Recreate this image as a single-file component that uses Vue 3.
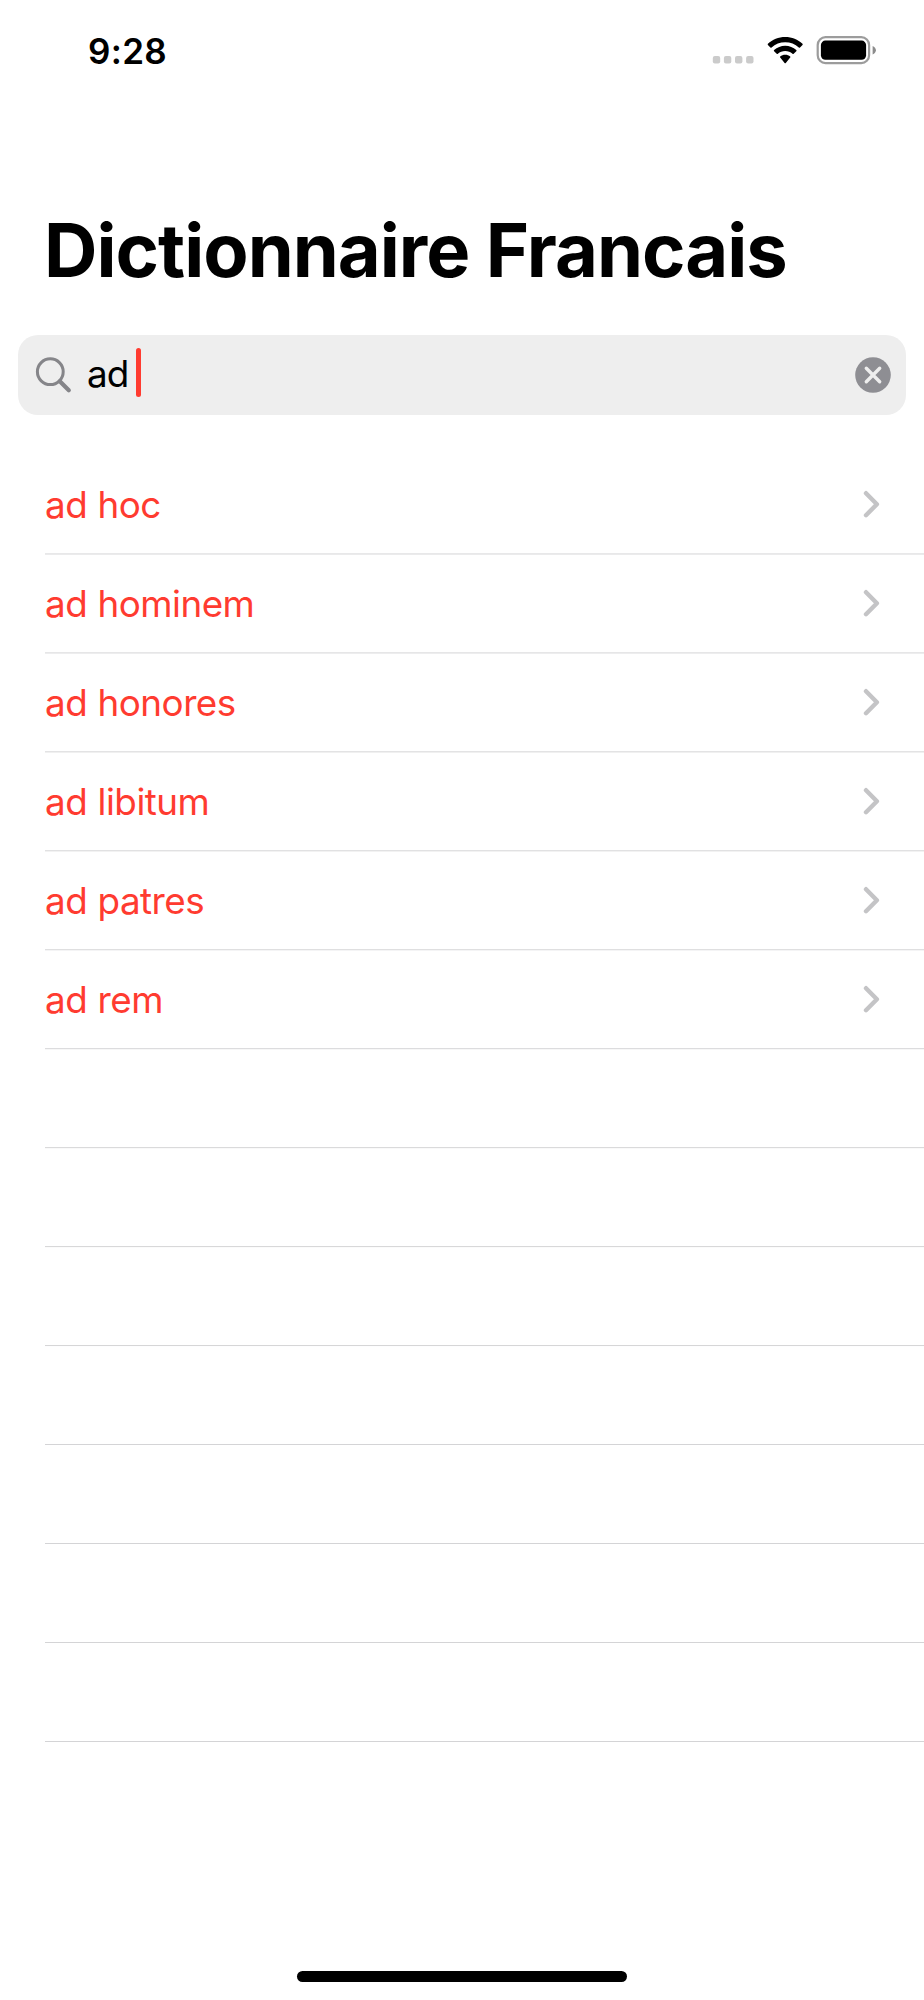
<script setup>
const words = ['ad hoc', 'ad hominem', 'ad honores', 'ad libitum', 'ad patres', 'ad rem']
const separatorCount = 13
const rowPitch = 98.96
</script>

<template>
  <main class="screen">
    <header class="status">
      <span class="time">9:28</span>
      <svg class="indicators" width="190" height="60" viewBox="0 0 190 60">
        <g fill="#cbcbcb">
          <rect x="12.8" y="36" width="7.4" height="7.4" rx="2" />
          <rect x="23.9" y="36" width="7.4" height="7.4" rx="2" />
          <rect x="35" y="36" width="7.4" height="7.4" rx="2" />
          <rect x="46.1" y="36" width="7.4" height="7.4" rx="2" />
        </g>
        <path d="M85.2 17C78.5 17 72.400 19.600 67.900 23.800Q67.400 24.400 67.900 25L70.400 27.500Q71 28 71.600 27.500C75.200 24.200 80 22.300 85.200 22.300S95.200 24.200 98.800 27.500Q99.400 28 100 27.500L102.500 25Q103 24.400 102.500 23.800C98 19.600 91.900 17 85.200 17Z" />
        <path d="M85.200 25.800C81 25.800 77.100 27.400 74.100 30Q73.500 30.600 74.100 31.200L76.700 33.800Q77.300 34.300 77.900 33.800C79.900 32.100 82.400 31.100 85.200 31.100S90.500 32.100 92.500 33.800Q93.100 34.300 93.700 33.800L96.300 31.200Q96.900 30.600 96.300 30C93.300 27.400 89.400 25.800 85.200 25.800Z" />
        <path d="M85.200 34.700C83.300 34.700 81.500 35.400 80.200 36.400Q79.600 37 80.200 37.600L84.600 42.900Q85.200 43.500 85.800 42.900L90.200 37.600Q90.800 37 90.200 36.400C88.900 35.400 87.100 34.700 85.200 34.700Z" />
        <rect x="117.700" y="17.200" width="51.400" height="25.900" rx="7.800" fill="none" stroke="#9c9c9c" stroke-width="2.200" />
        <rect x="120.900" y="20.600" width="45.200" height="19.200" rx="4.500" />
        <path d="M172.600 26V34.600C174.600 33.700 175.900 32.200 175.900 30.300S174.600 26.900 172.600 26Z" fill="#8c8c8c" />
      </svg>
    </header>

    <h1 class="title">Dictionnaire Francais</h1>

    <div class="search">
      <svg class="magnifier" width="40" height="40" viewBox="0 0 40 40" fill="none" stroke="#858589">
        <circle cx="17.300" cy="16.700" r="12.900" stroke-width="3" />
        <path d="M26.800 26.200L35.800 35.200" stroke-width="4.200" stroke-linecap="round" />
      </svg>
      <span class="query">ad</span>
      <span class="caret"></span>
      <svg class="clear" width="36" height="36" viewBox="0 0 36 36">
        <circle cx="18" cy="18" r="17.800" fill="#8e8e93" />
        <path d="M11.300 11.300L24.700 24.700M24.700 11.300L11.300 24.700" stroke="#eee" stroke-width="3.400" stroke-linecap="round" />
      </svg>
    </div>

    <section class="results">
      <svg class="separators" width="879" height="1300" viewBox="0 0 879 1300">
        <rect
          v-for="n in separatorCount"
          :key="n"
          x="0"
          :y="98.6 + (n - 1) * rowPitch"
          width="879"
          height="0.75"
          fill="#c6c6c8"
        />
      </svg>
      <ul class="list">
        <li v-for="word in words" :key="word" class="row">
          <span>{{ word }}</span>
          <svg class="chevron" width="18" height="30" viewBox="0 0 18 30">
            <path d="M3 4.200L13.900 15.200L3 26.200" fill="none" stroke="#c4c4c6" stroke-width="4.400" stroke-linecap="round" stroke-linejoin="round" />
          </svg>
        </li>
      </ul>
    </section>

    <div class="home-bar"></div>
  </main>
</template>

<style>
body {
  margin: 0;
  background: #fff;
}
</style>

<style scoped>
.screen {
  display: flex;
  flex-direction: column;
  width: 924px;
  height: 2000px;
  box-sizing: border-box;
  padding-bottom: 18px;
  background: #fff;
  color: #000;
  font-family: Inter, "Liberation Sans", sans-serif;
  overflow: hidden;
}

.status {
  display: flex;
  justify-content: space-between;
  height: 60px;
  padding: 20px 34px 0 88px;
}

.time {
  font-size: 35px;
  font-weight: 600;
  line-height: 62px;
  letter-spacing: 0.3px;
}

.title {
  margin: 120px 0 0 44px;
  font-size: 74px;
  font-weight: 700;
  line-height: 100px;
  letter-spacing: -0.99px;
  white-space: nowrap;
}

.search {
  display: flex;
  align-items: center;
  height: 80px;
  margin: 35px 18px 0;
  padding: 0 15.5px 0 15px;
  box-sizing: border-box;
  border-radius: 20px;
  background: #eee;
}

.query {
  margin-left: 14px;
  font-size: 36.8px;
  line-height: 78px;
  letter-spacing: -0.9px;
  padding-bottom: 2px;
}

.caret {
  width: 5px;
  height: 49px;
  margin-left: 8px;
  margin-top: -5px;
  border-radius: 2.5px;
  background: #ff3b30;
}

.clear {
  margin-left: auto;
}

.results {
  position: relative;
  margin: 40px 0 0 45px;
}

.separators {
  position: absolute;
  top: 0;
  left: 0;
}

.list {
  margin: 0;
  padding: 0;
  list-style: none;
}

.row {
  display: flex;
  align-items: center;
  justify-content: space-between;
  height: 98.96px;
  padding-right: 43px;
  color: #ff3b30;
  font-size: 36.8px;
  letter-spacing: -0.52px;
  word-spacing: 0.6px;
}

.home-bar {
  width: 330px;
  height: 11px;
  margin: auto auto 0;
  border-radius: 5.5px;
  background: #000;
}
</style>
